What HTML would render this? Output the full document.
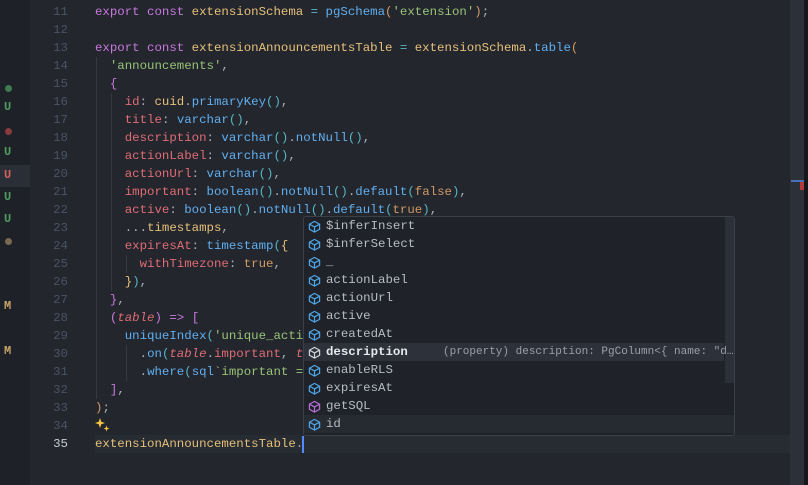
<!DOCTYPE html>
<html><head><meta charset="utf-8"><style>
*{margin:0;padding:0;box-sizing:border-box}
body{width:808px;height:485px;background:#23262d;overflow:hidden;position:relative;font-family:"Liberation Mono",monospace;font-size:12.4px}
.gut{position:absolute;left:0;top:0;width:30px;height:485px;background:#1e2127}
.g{position:absolute;left:4px;font-weight:bold;font-size:12px}
.dot{position:absolute;left:5px;width:7px;height:7px;border-radius:50%}
.ln{position:absolute;left:30px;width:38px;text-align:right;color:#4b5263;height:18px;line-height:18px}
.cl{position:absolute;left:95px;white-space:pre;height:18px;line-height:18px;color:#abb2bf}
.k{color:#c678dd}.y{color:#e5c07b}.b{color:#61afef}.r{color:#e06c75}.gr{color:#98c379}.o{color:#d19a66}.c{color:#56b6c2}.i{font-style:italic}
.guide{position:absolute;width:1px;background:#343944}
.pop{position:absolute;left:303px;top:216px;width:432px;height:220px;background:#1f2228;border:1px solid #3a3f4a;border-radius:3px}
.row{position:absolute;left:0;width:430px;height:18px;line-height:18px;color:#b6bcc6;white-space:pre}
.row svg{position:absolute;left:4px;top:3px}
.row span.t{position:absolute;left:22px}
</style></head><body>
<div class="gut"></div>
<div style="position:absolute;left:0;top:165px;width:30px;height:22px;background:#2a2f37"></div>
<div class="dot" style="top:85px;background:#3d7a4f"></div>
<div class="g" style="top:100px;color:#4e9a5f">U</div>
<div class="dot" style="top:128px;background:#8a3b3b"></div>
<div class="g" style="top:145px;color:#4e9a5f">U</div>
<div class="g" style="top:168px;color:#d3605b">U</div>
<div class="g" style="top:190px;color:#4e9a5f">U</div>
<div class="g" style="top:212px;color:#4e9a5f">U</div>
<div class="dot" style="top:238px;background:#7a6850"></div>
<div class="g" style="top:299px;color:#c9a46a">M</div>
<div class="g" style="top:344px;color:#c9a46a">M</div>

<div style="position:absolute;left:95px;top:435px;width:695px;height:18px;background:#272b32"></div>

<div class="guide" style="left:96px;top:57px;height:342px"></div>
<div class="guide" style="left:111px;top:93px;height:198px"></div>
<div class="guide" style="left:126px;top:255px;height:18px"></div>
<div class="guide" style="left:126px;top:345px;height:36px"></div>

<div class="ln" style="top:3px">11</div><div class="ln" style="top:21px">12</div><div class="ln" style="top:39px">13</div><div class="ln" style="top:57px">14</div><div class="ln" style="top:75px">15</div><div class="ln" style="top:93px">16</div><div class="ln" style="top:111px">17</div><div class="ln" style="top:129px">18</div><div class="ln" style="top:147px">19</div><div class="ln" style="top:165px">20</div><div class="ln" style="top:183px">21</div><div class="ln" style="top:201px">22</div><div class="ln" style="top:219px">23</div><div class="ln" style="top:237px">24</div><div class="ln" style="top:255px">25</div><div class="ln" style="top:273px">26</div><div class="ln" style="top:291px">27</div><div class="ln" style="top:309px">28</div><div class="ln" style="top:327px">29</div><div class="ln" style="top:345px">30</div><div class="ln" style="top:363px">31</div><div class="ln" style="top:381px">32</div><div class="ln" style="top:399px">33</div><div class="ln" style="top:417px">34</div><div class="ln" style="top:435px;color:#c8ccd4">35</div>

<div class="cl" style="top:3px"><span class="k">export const </span><span class="y">extensionSchema</span><span class="c"> = </span><span class="b">pgSchema</span><span class="o">(</span><span class="gr">'extension'</span><span class="o">)</span>;</div>
<div class="cl" style="top:39px"><span class="k">export const </span><span class="y">extensionAnnouncementsTable</span><span class="c"> = </span><span class="y">extensionSchema</span>.<span class="b">table</span><span class="o">(</span></div>
<div class="cl" style="top:57px">  <span class="gr">'announcements'</span>,</div>
<div class="cl" style="top:75px">  <span class="k">{</span></div>
<div class="cl" style="top:93px">    <span class="r">id</span>: <span class="y">cuid</span>.<span class="b">primaryKey</span><span class="c">()</span>,</div>
<div class="cl" style="top:111px">    <span class="r">title</span>: <span class="b">varchar</span><span class="c">()</span>,</div>
<div class="cl" style="top:129px">    <span class="r">description</span>: <span class="b">varchar</span><span class="c">()</span>.<span class="b">notNull</span><span class="c">()</span>,</div>
<div class="cl" style="top:147px">    <span class="r">actionLabel</span>: <span class="b">varchar</span><span class="c">()</span>,</div>
<div class="cl" style="top:165px">    <span class="r">actionUrl</span>: <span class="b">varchar</span><span class="c">()</span>,</div>
<div class="cl" style="top:183px">    <span class="r">important</span>: <span class="b">boolean</span><span class="c">()</span>.<span class="b">notNull</span><span class="c">()</span>.<span class="b">default</span><span class="c">(</span><span class="o">false</span><span class="c">)</span>,</div>
<div class="cl" style="top:201px">    <span class="r">active</span>: <span class="b">boolean</span><span class="c">()</span>.<span class="b">notNull</span><span class="c">()</span>.<span class="b">default</span><span class="c">(</span><span class="o">true</span><span class="c">)</span>,</div>
<div class="cl" style="top:219px">    ...<span class="y">timestamps</span>,</div>
<div class="cl" style="top:237px">    <span class="r">expiresAt</span>: <span class="b">timestamp</span><span class="c">(</span><span class="y">{</span></div>
<div class="cl" style="top:255px">      <span class="r">withTimezone</span>: <span class="o">true</span>,</div>
<div class="cl" style="top:273px">    <span class="y">}</span><span class="c">)</span>,</div>
<div class="cl" style="top:291px">  <span class="k">}</span>,</div>
<div class="cl" style="top:309px">  <span class="k">(</span><span class="r i">table</span><span class="k">)</span><span class="k"> =&gt; </span><span class="k">[</span></div>
<div class="cl" style="top:327px">    <span class="b">uniqueIndex</span><span class="c">(</span><span class="gr">'unique_acti</span></div>
<div class="cl" style="top:345px">      .<span class="b">on</span><span class="c">(</span><span class="r i">table</span>.<span class="r">important</span>, <span class="r i">t</span></div>
<div class="cl" style="top:363px">      .<span class="b">where</span><span class="c">(</span><span class="b">sql</span><span class="gr">`important =</span></div>
<div class="cl" style="top:381px">  <span class="k">]</span>,</div>
<div class="cl" style="top:399px"><span class="o">)</span>;</div>
<svg style="position:absolute;left:95px;top:418px" width="16" height="16" viewBox="0 0 16 16"><path d="M5 0L6.3 3.7L10 5L6.3 6.3L5 10L3.7 6.3L0 5L3.7 3.7Z" fill="#f5c542"/><path d="M11.5 7.5L12.3 9.7L14.5 10.5L12.3 11.3L11.5 13.5L10.7 11.3L8.5 10.5L10.7 9.7Z" fill="#f5c542"/></svg>
<div class="cl" style="top:435px"><span class="y">extensionAnnouncementsTable</span>.</div>
<div style="position:absolute;left:302px;top:436px;width:2px;height:17px;background:#528bff"></div>

<div style="position:absolute;left:790px;top:0;width:14px;height:485px;background:#2c3038"></div>
<div style="position:absolute;left:804px;top:0;width:4px;height:485px;background:#15171b"></div>
<div style="position:absolute;left:791px;top:180px;width:13px;height:2px;background:#4a72b8"></div>
<div style="position:absolute;left:800px;top:182px;width:4px;height:8px;background:#b33a3a"></div>

<div class="pop">
<div style="position:absolute;left:0;top:126px;width:420px;height:18px;background:#2c313a"></div>
<div style="position:absolute;left:0;top:198px;width:430px;height:18px;background:#262a31"></div>
<div style="position:absolute;left:421px;top:0;width:9px;height:166px;background:#2c3038"></div>
<div class="row" style="top:0"><svg width="13" height="13" viewBox="0 0 14 14" fill="none" stroke="#4fa6e8" stroke-width="1.3"><path d="M7 1.5L12.5 4.5V10L7 13L1.5 10V4.5Z M1.5 4.5L7 7.5L12.5 4.5 M7 7.5V13"/></svg><span class="t">$inferInsert</span></div>
<div class="row" style="top:18px"><svg width="13" height="13" viewBox="0 0 14 14" fill="none" stroke="#4fa6e8" stroke-width="1.3"><path d="M7 1.5L12.5 4.5V10L7 13L1.5 10V4.5Z M1.5 4.5L7 7.5L12.5 4.5 M7 7.5V13"/></svg><span class="t">$inferSelect</span></div>
<div class="row" style="top:36px"><svg width="13" height="13" viewBox="0 0 14 14" fill="none" stroke="#4fa6e8" stroke-width="1.3"><path d="M7 1.5L12.5 4.5V10L7 13L1.5 10V4.5Z M1.5 4.5L7 7.5L12.5 4.5 M7 7.5V13"/></svg><span class="t">_</span></div>
<div class="row" style="top:54px"><svg width="13" height="13" viewBox="0 0 14 14" fill="none" stroke="#4fa6e8" stroke-width="1.3"><path d="M7 1.5L12.5 4.5V10L7 13L1.5 10V4.5Z M1.5 4.5L7 7.5L12.5 4.5 M7 7.5V13"/></svg><span class="t">actionLabel</span></div>
<div class="row" style="top:72px"><svg width="13" height="13" viewBox="0 0 14 14" fill="none" stroke="#4fa6e8" stroke-width="1.3"><path d="M7 1.5L12.5 4.5V10L7 13L1.5 10V4.5Z M1.5 4.5L7 7.5L12.5 4.5 M7 7.5V13"/></svg><span class="t">actionUrl</span></div>
<div class="row" style="top:90px"><svg width="13" height="13" viewBox="0 0 14 14" fill="none" stroke="#4fa6e8" stroke-width="1.3"><path d="M7 1.5L12.5 4.5V10L7 13L1.5 10V4.5Z M1.5 4.5L7 7.5L12.5 4.5 M7 7.5V13"/></svg><span class="t">active</span></div>
<div class="row" style="top:108px"><svg width="13" height="13" viewBox="0 0 14 14" fill="none" stroke="#4fa6e8" stroke-width="1.3"><path d="M7 1.5L12.5 4.5V10L7 13L1.5 10V4.5Z M1.5 4.5L7 7.5L12.5 4.5 M7 7.5V13"/></svg><span class="t">createdAt</span></div>
<div class="row" style="top:126px"><svg width="13" height="13" viewBox="0 0 14 14" fill="none" stroke="#d0d4da" stroke-width="1.3"><path d="M7 1.5L12.5 4.5V10L7 13L1.5 10V4.5Z M1.5 4.5L7 7.5L12.5 4.5 M7 7.5V13"/></svg><span class="t" style="color:#e6e9ee;font-weight:bold">description</span><span style="position:absolute;left:139px;color:#9aa0aa;font-size:11px">(property) description: PgColumn&lt;{ name: "d…</span></div>
<div class="row" style="top:144px"><svg width="13" height="13" viewBox="0 0 14 14" fill="none" stroke="#4fa6e8" stroke-width="1.3"><path d="M7 1.5L12.5 4.5V10L7 13L1.5 10V4.5Z M1.5 4.5L7 7.5L12.5 4.5 M7 7.5V13"/></svg><span class="t">enableRLS</span></div>
<div class="row" style="top:162px"><svg width="13" height="13" viewBox="0 0 14 14" fill="none" stroke="#4fa6e8" stroke-width="1.3"><path d="M7 1.5L12.5 4.5V10L7 13L1.5 10V4.5Z M1.5 4.5L7 7.5L12.5 4.5 M7 7.5V13"/></svg><span class="t">expiresAt</span></div>
<div class="row" style="top:180px"><svg width="13" height="13" viewBox="0 0 14 14" fill="none" stroke="#b56fd6" stroke-width="1.3"><path d="M7 1.5L12.5 4.5V10L7 13L1.5 10V4.5Z M1.5 4.5L7 7.5L12.5 4.5 M7 7.5V13"/></svg><span class="t">getSQL</span></div>
<div class="row" style="top:198px"><svg width="13" height="13" viewBox="0 0 14 14" fill="none" stroke="#4fa6e8" stroke-width="1.3"><path d="M7 1.5L12.5 4.5V10L7 13L1.5 10V4.5Z M1.5 4.5L7 7.5L12.5 4.5 M7 7.5V13"/></svg><span class="t">id</span></div>
</div>
</body></html>
